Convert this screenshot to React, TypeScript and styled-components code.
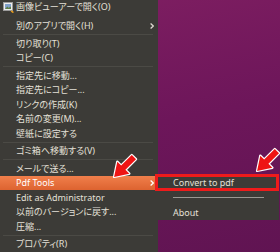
import React from "react";
import styled, { createGlobalStyle, css } from "styled-components";

const GlobalStyle = createGlobalStyle`
  html, body {
    margin: 0;
    padding: 0;
    overflow: hidden;
  }
  body {
    font-family: "Noto Sans", "Noto Sans CJK JP", sans-serif;
    font-feature-settings: "palt";
  }
`;

const Desktop = styled.div`
  position: relative;
  display: flex;
  width: 280px;
  height: 252px;
  overflow: hidden;
  background: linear-gradient(168deg, #801f62 0%, #6d165a 50%, #601452 100%);
`;

const Menu = styled.div`
  display: flex;
  flex-direction: column;
  width: 158px;
  background: #3c3b37;
`;

const Row = styled.div<{ $active?: boolean; $first?: boolean }>`
  display: flex;
  align-items: center;
  height: 14.5px;
  padding: 0 4px 0 3px;
  font-size: 9px;
  line-height: 14px;
  color: #e4e0d7;
  white-space: nowrap;

  ${(p) =>
    p.$first &&
    css`
      height: 18.75px;
      align-items: flex-start;
    `}

  ${(p) =>
    p.$active &&
    css`
      color: #ffffff;
      background: linear-gradient(#f07f4b, #dd6330);
    `}
`;

const Lead = styled.span`
  display: flex;
  width: 13px;
  height: 14px;
  padding-top: 2px;
  box-sizing: border-box;
  flex-shrink: 0;
`;

const Label = styled.span`
  flex: 1;
`;

const Chevron = styled.svg`
  flex-shrink: 0;
`;

const Separator = styled.div`
  height: 3px;
  display: flex;
  align-items: center;
  padding: 0 5px 0 3px;

  &::after {
    content: "";
    flex: 1;
    height: 1px;
    background: #4b4a45;
  }
`;

const Submenu = styled.div`
  position: absolute;
  left: 157px;
  top: 175px;
  width: 122px;
  display: flex;
  flex-direction: column;
  background: #3c3b37;
`;

const SubRow = styled.div`
  height: 15px;
  display: flex;
  align-items: center;
  padding-left: 16px;
  font-size: 9px;
  color: #e4e0d7;
  white-space: nowrap;
`;

const SubSeparator = styled.div`
  height: 15px;
  display: flex;
  align-items: center;
  padding: 0 15px 0 16px;

  &::after {
    content: "";
    flex: 1;
    height: 1px;
    background: #9a9893;
  }
`;

const Callout = styled.div`
  position: absolute;
  left: 155px;
  top: 174px;
  width: 124px;
  height: 17px;
  box-sizing: border-box;
  border: 3px solid #ee1b1b;
`;

const Pointer = styled.svg<{ $x: number; $y: number }>`
  position: absolute;
  left: ${(p) => p.$x}px;
  top: ${(p) => p.$y}px;
  overflow: visible;
`;

type Item =
  | { kind: "sep" }
  | { kind: "item"; label: string; sub?: boolean; icon?: boolean; active?: boolean };

const sep: Item = { kind: "sep" };
const it = (label: string, extra: Partial<Extract<Item, { kind: "item" }>> = {}): Item => ({
  kind: "item",
  label,
  ...extra,
});

const items: Item[] = [
  it("画像ビューアーで開く(O)", { icon: true }),
  it("別のアプリで開く(H)", { sub: true }),
  sep,
  it("切り取り(T)"),
  it("コピー(C)"),
  sep,
  it("指定先に移動..."),
  it("指定先にコピー..."),
  it("リンクの作成(K)"),
  it("名前の変更(M)..."),
  it("壁紙に設定する"),
  sep,
  it("ゴミ箱へ移動する(V)"),
  sep,
  it("メールで送る..."),
  it("Pdf Tools", { sub: true, active: true }),
  it("Edit as Administrator"),
  it("以前のバージョンに戻す..."),
  it("圧縮..."),
  sep,
  it("プロパティ(R)"),
];

const ImageIcon = () => (
  <svg width="11" height="11" viewBox="0 0 11 11">
    <rect x="0.5" y="0.5" width="9" height="8" fill="#ececec" stroke="#9c9c9c" />
    <rect x="2" y="2" width="6" height="5" fill="#7f9fc9" />
    <path d="M2 7 L4.3 4.4 L5.8 5.9 L7.2 4.6 L8 5.3 V7 Z" fill="#5f7f44" />
    <path d="M8.2 8.8 L10.4 10.6" stroke="#e59a1c" strokeWidth="1.6" />
  </svg>
);

const ChevronIcon = ({ color }: { color: string }) => (
  <Chevron width="4" height="6" viewBox="0 0 4 6">
    <polyline points="0.6,0.6 3.3,3 0.6,5.4" fill="none" stroke={color} strokeWidth="1.3" />
  </Chevron>
);

const RedArrow = ({ x, y }: { x: number; y: number }) => (
  <Pointer $x={x} $y={y} width="32" height="32" viewBox="-16 -16 32 32">
    <g transform="rotate(135)">
      <polygon
        points="-14,-3 1,-3 1,-8.5 14,0 1,8.5 1,3 -14,3"
        fill="#ee1414"
        stroke="#ffffff"
        strokeWidth="2.4"
        strokeLinejoin="round"
        paintOrder="stroke"
      />
    </g>
  </Pointer>
);

export default function App() {
  return (
    <>
      <GlobalStyle />
      <Desktop>
        <Menu>
          {items.map((item, i) =>
            item.kind === "sep" ? (
              <Separator key={i} />
            ) : (
              <Row key={i} $active={item.active} $first={i === 0}>
                <Lead>{item.icon && <ImageIcon />}</Lead>
                <Label>{item.label}</Label>
                {item.sub && <ChevronIcon color={item.active ? "#ffffff" : "#dfdbd2"} />}
              </Row>
            )
          )}
        </Menu>
        <Submenu>
          <SubRow>Convert to pdf</SubRow>
          <SubSeparator />
          <SubRow>About</SubRow>
        </Submenu>
        <Callout />
        <RedArrow x={108} y={151} />
        <RedArrow x={251} y={145} />
      </Desktop>
    </>
  );
}
